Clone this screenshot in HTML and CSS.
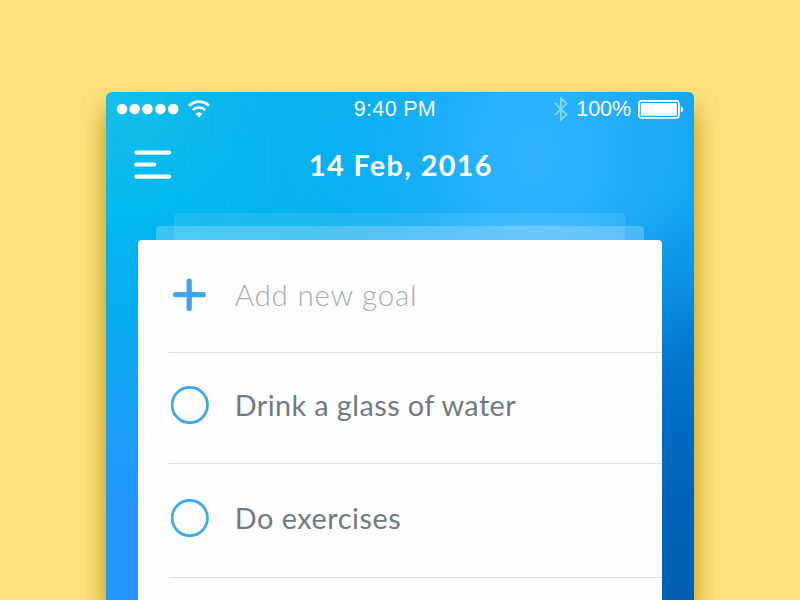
FILE: index.html
```html
<!DOCTYPE html>
<html lang="en">
<head>
<meta charset="utf-8">
<title>Goals</title>
<link rel="stylesheet" href="styles.css">
</head>
<body>
<main class="phone">
  <div class="status">
    <div class="status-left">
      <svg class="signal" width="64" height="12" viewBox="0 0 64 12" fill="#fff"><circle cx="6" cy="6" r="5.3"/><circle cx="18.7" cy="6" r="5.3"/><circle cx="31.5" cy="6" r="5.3"/><circle cx="44.4" cy="6" r="5.3"/><circle cx="57.2" cy="6" r="5.3"/></svg>
      <svg class="wifi" width="22" height="18" viewBox="0 0 22 18" fill="none" stroke="#fff" stroke-width="2.6"><path d="M.9 5.8A14.3 14.3 0 0 1 21.1 5.8"/><path d="M4.7 10.2A8.8 8.8 0 0 1 17.3 10.2"/><path d="M11 17.6L7.4 13.8A4.9 4.9 0 0 1 14.6 13.8Z" fill="#fff" stroke="none"/></svg>
    </div>
    <span class="time">9:40 PM</span>
    <div class="status-right">
      <svg class="bluetooth" width="14" height="26" viewBox="0 0 14 26" fill="none" stroke="#fff" stroke-width="1.9"><path d="M.8 7L12.5 18.4L7 23.6V2.4L12.5 7.6L.8 19"/></svg>
      <span class="percent">100%</span>
      <svg class="battery" width="46" height="19" viewBox="0 0 46 19"><rect x=".9" y=".9" width="40" height="17" rx="2.6" fill="none" stroke="#fff" stroke-width="1.8"/><rect x="2.8" y="3" width="36" height="12.8" rx=".8" fill="#fff"/><path d="M42.8 6.2Q45.2 7 45.2 9.4T42.8 12.6Z" fill="#fff"/></svg>
    </div>
  </div>
  <header class="header">
    <svg class="menu" width="38" height="30" viewBox="0 0 38 30" fill="none" stroke="#fff" stroke-width="4.2" stroke-linecap="round"><path d="M2.2 2.6H35.2M2.2 14.5H20.2M2.2 26.6H35.2"/></svg>
    <h1 class="title">14 Feb, 2016</h1>
  </header>
  <div class="stack stack-back"></div>
  <div class="stack stack-front"></div>
  <ul class="card">
    <li class="row add">
      <svg class="plus" width="38" height="38" viewBox="0 0 38 38" stroke="#3ca5ee" stroke-width="5.2" stroke-linecap="round"><path d="M18.2 5V32.4M4.6 18.7H32.2"/></svg>
      <span class="label label-add">Add new goal</span>
    </li>
    <li class="row drink"><svg class="check" width="38" height="38" viewBox="0 0 38 38"><circle cx="18.8" cy="19" r="17.7" fill="none" stroke="#3da7eb" stroke-width="2.7"/></svg><span class="label label-drink">Drink a glass of water</span></li>
    <li class="row exercise"><svg class="check" width="38" height="38" viewBox="0 0 38 38"><circle cx="18.8" cy="19" r="17.7" fill="none" stroke="#3da7eb" stroke-width="2.7"/></svg><span class="label label-exercise">Do exercises</span></li>
  </ul>
</main>
</body>
</html>
```
FILE: styles.css
```css
* { box-sizing: border-box; }
html, body { height: 100%; margin: 0; }
body {
  overflow: hidden;
  padding-top: 92px;
  background: #ffe17c;
  font-family: Lato, sans-serif;
}
.phone {
  position: relative;
  isolation: isolate;
  display: flex;
  flex-direction: column;
  width: 588.5px;
  height: 508px;
  margin-left: 105.7px;
  border-radius: 6px 6px 0 0;
  background:
    radial-gradient(ellipse 170px 130px at 0 0, #16bfe8, rgba(0, 183, 240, 0)),
    linear-gradient(180deg, #00b7f0 0, #00b7f0 120px, #06adf0 210px, #18a0f5 325px, #2396ff 420px, #2396ff 100%);
  box-shadow: 0 16px 22px rgba(176, 132, 0, .5), 0 22px 24px rgba(184, 142, 0, .5);
}
.phone::before, .phone::after {
  content: "";
  position: absolute;
  inset: 0;
  z-index: -1;
  border-radius: inherit;
}
.phone::before {
  background: linear-gradient(180deg, #14a4ef 0, #12a3ee 90px, #0fa0ec 120px, #068de0 190px, #0579cf 255px, #006dc3 330px, #0063b7 410px, #005fb0 508px);
  -webkit-mask-image: linear-gradient(90deg, transparent 10%, #000 94%);
  mask-image: linear-gradient(90deg, transparent 10%, #000 94%);
}
.phone::after {
  background: radial-gradient(ellipse 320px 400px at 430px 65px, #2db3ff 0, rgba(44, 179, 255, .85) 18%, rgba(40, 178, 255, .5) 34%, rgba(34, 178, 255, .18) 50%, rgba(30, 178, 255, 0) 68%);
}
.status {
  display: grid;
  grid-template-columns: 1fr auto 1fr;
  align-items: center;
  height: 34px;
  padding: 0 10px;
  color: #fff;
  font: 21.5px/34px "Liberation Sans", sans-serif;
}
.status-left, .status-right { display: flex; align-items: center; }
.status-left { gap: 8px; }
.status-right { justify-content: flex-end; }
.time { margin-right: 10px; letter-spacing: .3px; }
.bluetooth { margin-right: 8px; opacity: .45; }
.percent { margin-right: 7px; }
.header {
  display: grid;
  grid-template-columns: 38px 1fr 38px;
  align-items: center;
  height: 78px;
  padding: 0 28px;
}
.title {
  margin: 0;
  padding-left: 2px;
  text-align: center;
  color: #fff;
  font-size: 28.8px;
  font-weight: 700;
  line-height: 40px;
  letter-spacing: 1.35px;
}
.stack { flex: none; margin: 0 auto; border-radius: 4px 4px 0 0; }
.stack-back { width: 451px; height: 27px; margin-top: 9.4px; background: rgba(255, 255, 255, .1); }
.stack-front { width: 488px; height: 14px; margin-top: -14px; background: rgba(255, 255, 255, .22); }
.card {
  flex: 1;
  width: 524.5px;
  margin: 0 auto;
  padding: 0 0 0 31px;
  list-style: none;
  border-radius: 4px 4px 0 0;
  background: #fefefe;
}
.row {
  display: flex;
  align-items: center;
  gap: 26px;
  padding-left: 2px;
  border-bottom: 1px solid #dfdfe1;
}
.add { height: 112.2px; padding-bottom: 2px; }
.drink { height: 111.3px; padding-bottom: 6px; }
.exercise { height: 113.7px; padding-bottom: 4px; }
.plus, .check { flex: none; }
.label { color: #727983; font-size: 28.8px; line-height: 40px; white-space: nowrap; }
.label-add { color: #a9abb2; font-size: 29.6px; font-weight: 300; letter-spacing: .75px; }
.label-drink { letter-spacing: .43px; }
.label-exercise { letter-spacing: .55px; }
```
